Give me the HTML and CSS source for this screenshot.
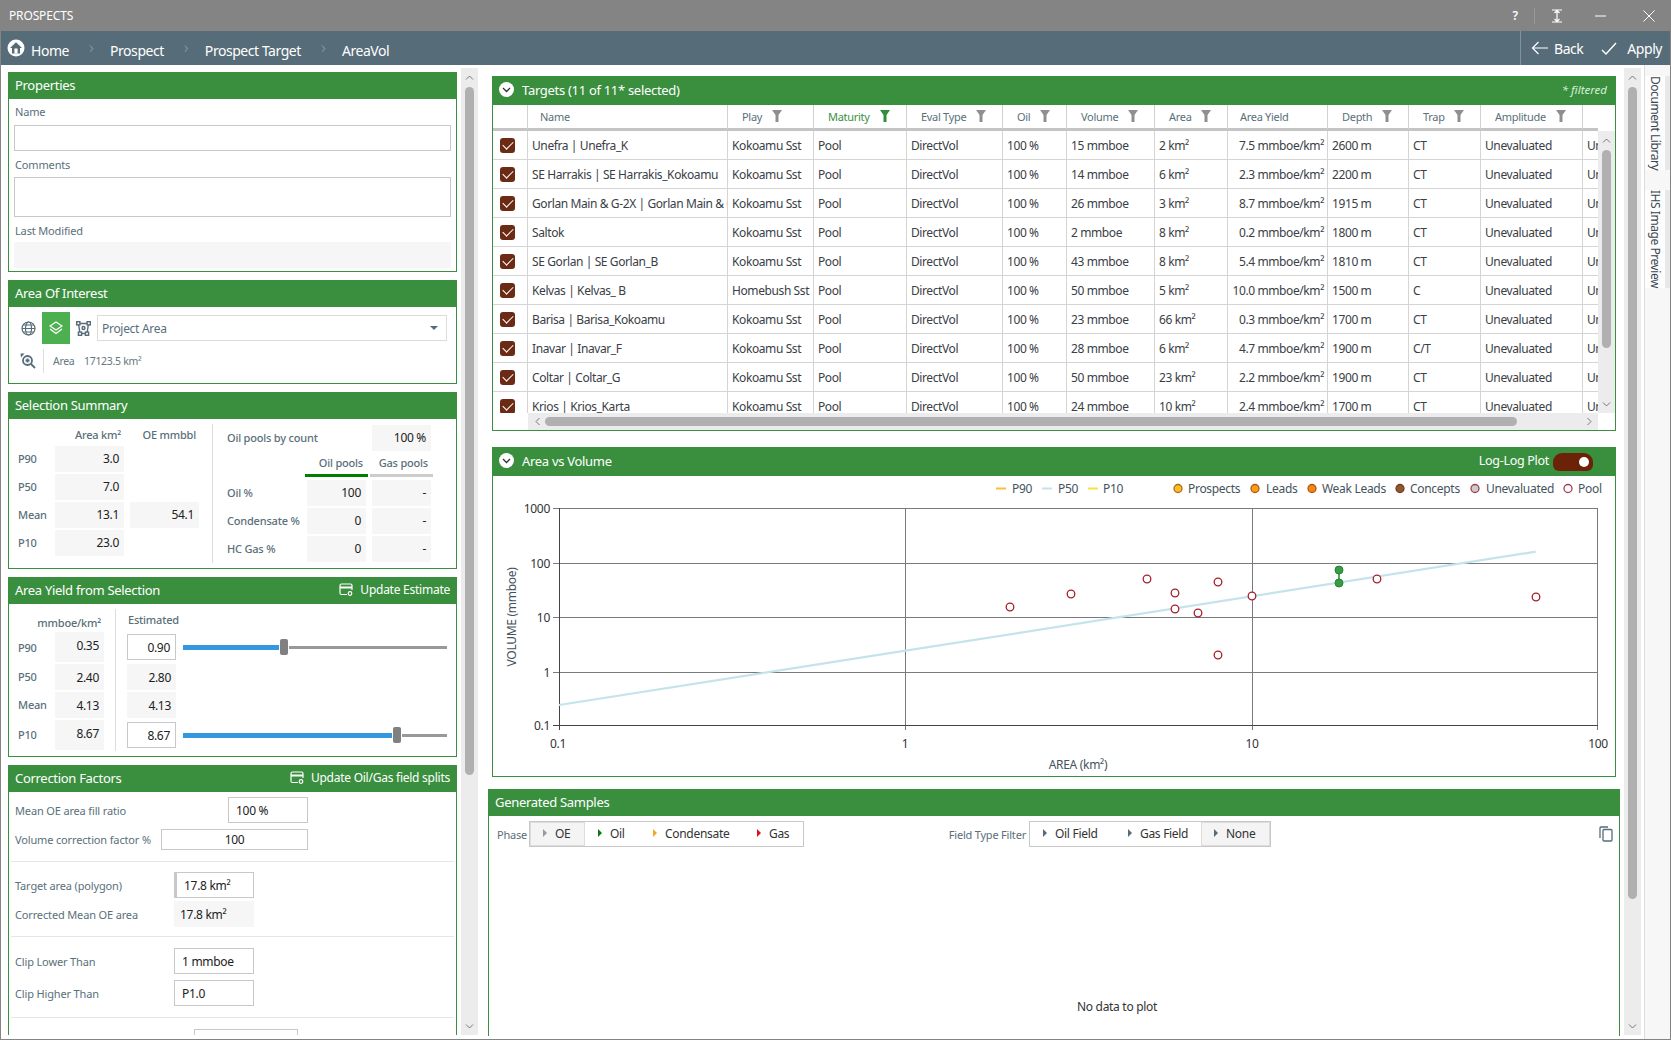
FILE: index.html
```html
<!DOCTYPE html>
<html lang="en">
<head>
<meta charset="utf-8">
<title>Prospects</title>
<link rel="stylesheet" href="styles.css">
</head>
<body>
<div class="window">
  <header class="titlebar">
    <span class="app-title">PROSPECTS</span>
    <div class="win-controls">
      <span class="help">?</span>
      <span class="win-sep"></span>
      <svg class="wi ibeam" width="12" height="14" viewBox="0 0 12 14"><path d="M1 1H11M1 13H11M6 1V13M3.5 4L6 1.5L8.5 4M3.5 10L6 12.5L8.5 10" fill="none" stroke="#fff" stroke-width="1.2"/></svg>
      <svg class="wi minim" width="11" height="2" viewBox="0 0 11 2"><path d="M0 1H11" stroke="#fff" stroke-width="1"/></svg>
      <svg class="wi closex" width="12" height="12" viewBox="0 0 12 12"><path d="M0.5 0.5L11.5 11.5M11.5 0.5L0.5 11.5" stroke="#fff" stroke-width="1"/></svg>
    </div>
  </header>
  <nav class="navbar">
    <svg class="home-ic" width="18" height="18" viewBox="0 0 18 18"><circle cx="9" cy="9" r="8.5" fill="#fff"/><path d="M9 3.2L15 9H13V14.5H5V9H3Z" fill="#566c78"/><path d="M7.4 9.5H10.6V14.5H7.4Z" fill="#fff"/></svg>
    <a class="crumb c-home">Home</a>
    <span class="crumb-sep">›</span>
    <a class="crumb">Prospect</a>
    <span class="crumb-sep">›</span>
    <a class="crumb">Prospect Target</a>
    <span class="crumb-sep">›</span>
    <a class="crumb">AreaVol</a>
    <div class="nav-actions">
      <button class="nav-btn back"><svg width="18" height="14" viewBox="0 0 18 14"><path d="M17 7H1.5M7.5 1L1.5 7L7.5 13" fill="none" stroke="#fff" stroke-width="1.2"/></svg>Back</button>
      <button class="nav-btn apply"><svg width="16" height="13" viewBox="0 0 16 13"><path d="M1 8L5 12L15 1" fill="none" stroke="#fff" stroke-width="1.4"/></svg>Apply</button>
    </div>
  </nav>

  <main class="main">
    <section class="left-pane">
      <article class="panel p-props">
        <h2 class="phead">Properties</h2>
        <div class="props-body">
          <div class="flabel lh26">Name</div>
          <div class="input h26"></div>
          <div class="flabel lc">Comments</div>
          <div class="input h40"></div>
          <div class="flabel lm">Last Modified</div>
          <div class="readonly h26"></div>
        </div>
      </article>

      <article class="panel p-aoi">
        <h2 class="phead">Area Of Interest</h2>
        <div class="aoi-row1">
          <span class="aoi-ic w28"><svg width="15" height="15" viewBox="0 0 15 15"><g fill="none" stroke="#566c78" stroke-width="1.2"><circle cx="7.5" cy="7.5" r="6.5"/><ellipse cx="7.5" cy="7.5" rx="3" ry="6.5"/><path d="M1 7.5H14M2 4H13M2 11H13"/></g></svg></span>
          <span class="aoi-ic w28 active"><svg width="14" height="14" viewBox="0 0 14 14"><g fill="none" stroke="#fff" stroke-width="1.3"><path d="M7 1L13 5L7 9L1 5Z"/><path d="M1 8L7 12.5L13 8"/></g></svg></span>
          <span class="aoi-ic w27"><svg width="15" height="15" viewBox="0 0 15 15"><g fill="none" stroke="#566c78" stroke-width="1.4"><path d="M2.5 2.5L12.5 2.5L11 12.5H4Z"/><rect x="0.7" y="0.7" width="3.2" height="3.2" fill="#fff"/><rect x="11.1" y="0.7" width="3.2" height="3.2" fill="#fff"/><rect x="2.4" y="11.1" width="3.2" height="3.2" fill="#fff"/><rect x="9.4" y="11.1" width="3.2" height="3.2" fill="#fff"/><circle cx="7.5" cy="7" r="1.5"/></g></svg></span>
          <div class="dropdown"><span>Project Area</span><span class="caret"></span></div>
        </div>
        <div class="aoi-row2">
          <span class="zoom-ic"><svg width="16" height="16" viewBox="0 0 16 16"><g fill="none" stroke="#566c78" stroke-width="1.8"><circle cx="7.5" cy="7.5" r="4.5"/><path d="M11 11L15 15M5.5 7.5H9.5M7.5 5.5V9.5"/></g><path d="M0.5 0.5H4.5L1 4.5Z" fill="#566c78"/></svg></span>
          <span class="area-k">Area</span><span class="area-v">17123.5 km²</span>
        </div>
      </article>

      <article class="panel p-sel">
        <h2 class="phead">Selection Summary</h2>
        <div class="sel-body">
          <div class="sel-left">
            <span></span><span class="colhead pr3">Area km²</span><span class="colhead oehead">OE mmbbl</span>
            <span class="rlabel">P90</span><span class="cell">3.0</span><span></span>
            <span class="rlabel">P50</span><span class="cell">7.0</span><span></span>
            <span class="rlabel">Mean</span><span class="cell">13.1</span><span class="cell oe">54.1</span>
            <span class="rlabel">P10</span><span class="cell">23.0</span><span></span>
          </div>
          <div class="vdiv"></div>
          <div class="sel-right">
            <span class="rlabel span2">Oil pools by count</span><span class="cell c-gas bottom">100 %</span>
            <span></span><span class="tab tab-oil">Oil pools</span><span class="tab tab-gas">Gas pools</span>
            <span class="rlabel">Oil %</span><span class="cell c-oil bottom">100</span><span class="cell c-gas bottom">-</span>
            <span class="rlabel">Condensate %</span><span class="cell c-oil bottom">0</span><span class="cell c-gas bottom">-</span>
            <span class="rlabel">HC Gas %</span><span class="cell c-oil bottom">0</span><span class="cell c-gas bottom">-</span>
          </div>
        </div>
      </article>

      <article class="panel p-yield">
        <h2 class="phead"><span>Area Yield from Selection</span>
          <span class="phead-act"><svg width="14" height="13" viewBox="0 0 14 13"><g fill="none" stroke="#fff" stroke-width="1.2"><path d="M8 11.5H2.5Q1 11.5 1 10V2.5Q1 1 2.5 1H11.5Q13 1 13 2.5V7"/><path d="M1 4.5H13" stroke-width="2"/><circle cx="11" cy="10.5" r="1.8"/></g></svg>Update Estimate</span></h2>
        <div class="yield-body">
          <div class="yield-left">
            <span></span><span class="colhead yhead">mmboe/km²</span>
            <span class="rlabel">P90</span><span class="cell top">0.35</span>
            <span class="rlabel">P50</span><span class="cell bottom">2.40</span>
            <span class="rlabel">Mean</span><span class="cell bottom">4.13</span>
            <span class="rlabel">P10</span><span class="cell top">8.67</span>
          </div>
          <div class="vdiv"></div>
          <div class="yield-right">
            <span class="colhead esthead">Estimated</span><span></span>
            <span class="input num bottom">0.90</span><div class="slider bottom"><i class="fill f90"></i><b class="knob"></b><i class="rest"></i></div>
            <span class="cell bottom">2.80</span><span></span>
            <span class="cell bottom">4.13</span><span></span>
            <span class="input num bottom">8.67</span><div class="slider bottom"><i class="fill f10"></i><b class="knob"></b><i class="rest"></i></div>
          </div>
        </div>
      </article>

      <article class="panel p-corr">
        <h2 class="phead"><span>Correction Factors</span>
          <span class="phead-act"><svg width="14" height="13" viewBox="0 0 14 13"><g fill="none" stroke="#fff" stroke-width="1.2"><path d="M8 11.5H2.5Q1 11.5 1 10V2.5Q1 1 2.5 1H11.5Q13 1 13 2.5V7"/><path d="M1 4.5H13" stroke-width="2"/><circle cx="11" cy="10.5" r="1.8"/></g></svg>Update Oil/Gas field splits</span></h2>
        <div class="corr-body">
          <div class="cf-row h26 mt5"><span class="cf-l l213">Mean OE area fill ratio</span><span class="input w80 txt">100 %</span></div>
          <div class="cf-row h21 mt6"><span class="cf-l l146">Volume correction factor %</span><span class="input w147 centered">100</span></div>
          <hr class="cf-hr mt11">
          <div class="cf-row h26 mt10"><span class="cf-l l159">Target area (polygon)</span><span class="input w80 txt thick">17.8 km²</span></div>
          <div class="cf-row h26 mt3"><span class="cf-l l159">Corrected Mean OE area</span><span class="readonly w80 txt2">17.8 km²</span></div>
          <hr class="cf-hr mt9">
          <div class="cf-row h26 mt11"><span class="cf-l l159">Clip Lower Than</span><span class="input w80 txt">1 mmboe</span></div>
          <div class="cf-row h26 mt6"><span class="cf-l l159">Clip Higher Than</span><span class="input w80 txt">P1.0</span></div>
          <hr class="cf-hr mt11">
          <div class="cf-row h26 mt11"><span class="cf-l l179"></span><span class="input w104"></span></div>
        </div>
      </article>
    </section>

    <div class="vs vs-left">
      <svg class="arr" width="9" height="5" viewBox="0 0 9 5"><path d="M1 4.5L4.5 1L8 4.5" fill="none" stroke="#777"/></svg>
      <span class="thumb t-left"></span>
      <svg class="arr end" width="9" height="5" viewBox="0 0 9 5"><path d="M1 .5L4.5 4L8 .5" fill="none" stroke="#777"/></svg>
    </div>

    <section class="right-pane">
      <article class="panel p-targets">
        <h2 class="phead big"><span class="ph-left"><span class="chev"><svg width="9" height="6" viewBox="0 0 9 6"><path d="M1 1L4.5 4.5L8 1" fill="none" stroke="#333" stroke-width="1.3"/></svg></span>Targets (11 of 11* selected)</span><em class="filtered">* filtered</em></h2>
        <div class="grid-row">
          <div class="grid-wrap">
            <table class="grid">
              <colgroup><col class="k0"><col class="k1"><col class="k2"><col class="k3"><col class="k4"><col class="k5"><col class="k6"><col class="k7"><col class="k8"><col class="k9"><col class="k10"><col class="k11"><col class="k12"></colgroup>
              <thead><tr>
                <th></th>
                <th class="pl12">Name</th>
                <th><div class="thi r31"><span>Play</span><svg class="flt" viewBox="0 0 10 12"><path d="M0 0H10L6.5 5V12H3.5V5Z"/></svg></div></th>
                <th class="on"><div class="thi"><span>Maturity</span><svg class="flt" viewBox="0 0 10 12"><path d="M0 0H10L6.5 5V12H3.5V5Z"/></svg></div></th>
                <th><div class="thi"><span>Eval Type</span><svg class="flt" viewBox="0 0 10 12"><path d="M0 0H10L6.5 5V12H3.5V5Z"/></svg></div></th>
                <th><div class="thi"><span>Oil</span><svg class="flt" viewBox="0 0 10 12"><path d="M0 0H10L6.5 5V12H3.5V5Z"/></svg></div></th>
                <th><div class="thi"><span>Volume</span><svg class="flt" viewBox="0 0 10 12"><path d="M0 0H10L6.5 5V12H3.5V5Z"/></svg></div></th>
                <th><div class="thi"><span>Area</span><svg class="flt" viewBox="0 0 10 12"><path d="M0 0H10L6.5 5V12H3.5V5Z"/></svg></div></th>
                <th class="pl12">Area Yield</th>
                <th><div class="thi"><span>Depth</span><svg class="flt" viewBox="0 0 10 12"><path d="M0 0H10L6.5 5V12H3.5V5Z"/></svg></div></th>
                <th><div class="thi"><span>Trap</span><svg class="flt" viewBox="0 0 10 12"><path d="M0 0H10L6.5 5V12H3.5V5Z"/></svg></div></th>
                <th><div class="thi"><span>Amplitude</span><svg class="flt" viewBox="0 0 10 12"><path d="M0 0H10L6.5 5V12H3.5V5Z"/></svg></div></th>
                <th></th>
              </tr></thead>
              <tbody>
                <tr><td class="ck"><span class="cb"></span></td><td>Unefra | Unefra_K</td><td>Kokoamu Sst</td><td>Pool</td><td>DirectVol</td><td>100 %</td><td>15 mmboe</td><td>2 km²</td><td class="ra">7.5 mmboe/km²</td><td>2600 m</td><td>CT</td><td>Unevaluated</td><td>Unevaluated</td></tr>
                <tr><td class="ck"><span class="cb"></span></td><td>SE Harrakis | SE Harrakis_Kokoamu</td><td>Kokoamu Sst</td><td>Pool</td><td>DirectVol</td><td>100 %</td><td>14 mmboe</td><td>6 km²</td><td class="ra">2.3 mmboe/km²</td><td>2200 m</td><td>CT</td><td>Unevaluated</td><td>Unevaluated</td></tr>
                <tr><td class="ck"><span class="cb"></span></td><td>Gorlan Main &amp; G-2X | Gorlan Main &amp; G-2X</td><td>Kokoamu Sst</td><td>Pool</td><td>DirectVol</td><td>100 %</td><td>26 mmboe</td><td>3 km²</td><td class="ra">8.7 mmboe/km²</td><td>1915 m</td><td>CT</td><td>Unevaluated</td><td>Unevaluated</td></tr>
                <tr><td class="ck"><span class="cb"></span></td><td>Saltok</td><td>Kokoamu Sst</td><td>Pool</td><td>DirectVol</td><td>100 %</td><td>2 mmboe</td><td>8 km²</td><td class="ra">0.2 mmboe/km²</td><td>1800 m</td><td>CT</td><td>Unevaluated</td><td>Unevaluated</td></tr>
                <tr><td class="ck"><span class="cb"></span></td><td>SE Gorlan | SE Gorlan_B</td><td>Kokoamu Sst</td><td>Pool</td><td>DirectVol</td><td>100 %</td><td>43 mmboe</td><td>8 km²</td><td class="ra">5.4 mmboe/km²</td><td>1810 m</td><td>CT</td><td>Unevaluated</td><td>Unevaluated</td></tr>
                <tr><td class="ck"><span class="cb"></span></td><td>Kelvas | Kelvas_ B</td><td>Homebush Sst</td><td>Pool</td><td>DirectVol</td><td>100 %</td><td>50 mmboe</td><td>5 km²</td><td class="ra">10.0 mmboe/km²</td><td>1500 m</td><td>C</td><td>Unevaluated</td><td>Unevaluated</td></tr>
                <tr><td class="ck"><span class="cb"></span></td><td>Barisa | Barisa_Kokoamu</td><td>Kokoamu Sst</td><td>Pool</td><td>DirectVol</td><td>100 %</td><td>23 mmboe</td><td>66 km²</td><td class="ra">0.3 mmboe/km²</td><td>1700 m</td><td>CT</td><td>Unevaluated</td><td>Unevaluated</td></tr>
                <tr><td class="ck"><span class="cb"></span></td><td>Inavar | Inavar_F</td><td>Kokoamu Sst</td><td>Pool</td><td>DirectVol</td><td>100 %</td><td>28 mmboe</td><td>6 km²</td><td class="ra">4.7 mmboe/km²</td><td>1900 m</td><td>C/T</td><td>Unevaluated</td><td>Unevaluated</td></tr>
                <tr><td class="ck"><span class="cb"></span></td><td>Coltar | Coltar_G</td><td>Kokoamu Sst</td><td>Pool</td><td>DirectVol</td><td>100 %</td><td>50 mmboe</td><td>23 km²</td><td class="ra">2.2 mmboe/km²</td><td>1900 m</td><td>CT</td><td>Unevaluated</td><td>Unevaluated</td></tr>
                <tr><td class="ck"><span class="cb"></span></td><td>Krios | Krios_Karta</td><td>Kokoamu Sst</td><td>Pool</td><td>DirectVol</td><td>100 %</td><td>24 mmboe</td><td>10 km²</td><td class="ra">2.4 mmboe/km²</td><td>1700 m</td><td>CT</td><td>Unevaluated</td><td>Unevaluated</td></tr>
              </tbody>
            </table>
          </div>
          <div class="vs vs-table">
            <svg class="arr" width="9" height="5" viewBox="0 0 9 5"><path d="M1 4.5L4.5 1L8 4.5" fill="none" stroke="#777"/></svg>
            <span class="thumb t-table"></span>
            <svg class="arr end" width="9" height="5" viewBox="0 0 9 5"><path d="M1 .5L4.5 4L8 .5" fill="none" stroke="#777"/></svg>
          </div>
        </div>
        <div class="hs-row">
          <div class="hs">
            <svg width="5" height="9" viewBox="0 0 5 9"><path d="M4.5 1L1 4.5L4.5 8" fill="none" stroke="#777"/></svg>
            <span class="hthumb"></span>
            <svg class="hs-end" width="5" height="9" viewBox="0 0 5 9"><path d="M.5 1L4 4.5L.5 8" fill="none" stroke="#777"/></svg>
          </div>
        </div>
      </article>

      <article class="panel p-chart">
        <h2 class="phead big"><span class="ph-left"><span class="chev"><svg width="9" height="6" viewBox="0 0 9 6"><path d="M1 1L4.5 4.5L8 1" fill="none" stroke="#333" stroke-width="1.3"/></svg></span>Area vs Volume</span>
          <span class="loglog">Log-Log Plot<span class="toggle"><span class="knob-w"></span></span></span></h2>
        <svg class="chart" width="1122" height="300" viewBox="493 476 1122 300">
          <g class="lg">
            <path d="M996 488.5H1006" stroke="#fdbb42" stroke-width="2"/><text x="1012" y="493">P90</text>
            <path d="M1042 488.5H1052" stroke="#c5e3ec" stroke-width="2"/><text x="1058" y="493">P50</text>
            <path d="M1088 488.5H1098" stroke="#fde047" stroke-width="2"/><text x="1103" y="493">P10</text>
            <circle cx="1178" cy="488.5" r="4" fill="#ffc21a" stroke="#b0652a" stroke-width="1.3"/><text x="1188" y="493">Prospects</text>
            <circle cx="1255" cy="488.5" r="4" fill="#ff9f0a" stroke="#b0552a" stroke-width="1.3"/><text x="1266" y="493">Leads</text>
            <circle cx="1312" cy="488.5" r="4" fill="#f58a07" stroke="#b0552a" stroke-width="1.3"/><text x="1322" y="493">Weak Leads</text>
            <circle cx="1400" cy="488.5" r="4" fill="#8b5a2b" stroke="#7a3a2a" stroke-width="1.3"/><text x="1410" y="493">Concepts</text>
            <circle cx="1475" cy="488.5" r="4" fill="#ccc" stroke="#a04050" stroke-width="1.3"/><text x="1486" y="493">Unevaluated</text>
            <circle cx="1568" cy="488.5" r="4" fill="#fff" stroke="#a04050" stroke-width="1.3"/><text x="1578" y="493">Pool</text>
          </g>
          <g class="gridl">
            <path d="M553 508.5H1598M553 563.5H1598M553 617.5H1598M553 672.5H1598"/>
            <path d="M905.5 508V730M1252.5 508V730M1597.5 508V730"/>
          </g>
          <path d="M559.5 508V730M553 725.5H1598" fill="none" stroke="#444" stroke-width="1"/>
          <g class="ticks">
            <text x="550" y="513" text-anchor="end">1000</text>
            <text x="550" y="568" text-anchor="end">100</text>
            <text x="550" y="622" text-anchor="end">10</text>
            <text x="550" y="677" text-anchor="end">1</text>
            <text x="550" y="730" text-anchor="end">0.1</text>
            <text x="558" y="748" text-anchor="middle">0.1</text>
            <text x="905" y="748" text-anchor="middle">1</text>
            <text x="1252" y="748" text-anchor="middle">10</text>
            <text x="1598" y="748" text-anchor="middle">100</text>
          </g>
          <text class="axt" x="1078" y="769" text-anchor="middle">AREA (km²)</text>
          <text class="axt" transform="translate(516 617) rotate(-90)" text-anchor="middle">VOLUME (mmboe)</text>
          <path d="M559 705L905.6 650.7L1535.6 551.7" fill="none" stroke="#c5e3ec" stroke-width="2.2"/>
          <g fill="#fff" stroke="#a3202c" stroke-width="1.3">
            <circle cx="1010" cy="607" r="3.8"/><circle cx="1071" cy="594" r="3.8"/><circle cx="1147" cy="579" r="3.8"/>
            <circle cx="1175" cy="593" r="3.8"/><circle cx="1175" cy="609" r="3.8"/><circle cx="1198" cy="613" r="3.8"/>
            <circle cx="1218" cy="582" r="3.8"/><circle cx="1218" cy="655" r="3.8"/><circle cx="1252" cy="596" r="3.8"/>
            <circle cx="1377" cy="579" r="3.8"/><circle cx="1536" cy="597" r="3.8"/>
          </g>
          <path d="M1339 570V583" stroke="#1e8a2a" stroke-width="1.5"/>
          <circle cx="1339" cy="570" r="4" fill="#3a9a48" stroke="#1e8a2a"/>
          <circle cx="1339" cy="583" r="4" fill="#3a9a48" stroke="#1e8a2a"/>
        </svg>
      </article>

      <article class="panel p-gen">
        <h2 class="phead">Generated Samples</h2>
        <div class="gen-bar">
          <div class="seg-group g1">
            <span class="seg-l l32">Phase</span>
            <div class="seg">
              <span class="sb w55 sel"><i class="tri t-gray"></i>OE</span>
              <span class="sb w55"><i class="tri t-green"></i>Oil</span>
              <span class="sb w104"><i class="tri t-orange"></i>Condensate</span>
              <span class="sb w59"><i class="tri t-red"></i>Gas</span>
            </div>
          </div>
          <div class="seg-group">
            <span class="seg-l l120">Field Type Filter</span>
            <div class="seg">
              <span class="sb w85"><i class="tri t-slate"></i>Oil Field</span>
              <span class="sb w86"><i class="tri t-slate"></i>Gas Field</span>
              <span class="sb w69 sel"><i class="tri t-slate"></i>None</span>
            </div>
          </div>
          <svg class="copy" width="14" height="16" viewBox="0 0 14 16"><g fill="none" stroke="#566c78" stroke-width="1.3"><rect x="4" y="3.5" width="9" height="11.5" rx="1"/><path d="M1 12V2Q1 1 2 1H9"/></g></svg>
        </div>
        <p class="nodata">No data to plot</p>
      </article>
    </section>

    <div class="vs vs-right">
      <svg class="arr" width="9" height="5" viewBox="0 0 9 5"><path d="M1 4.5L4.5 1L8 4.5" fill="none" stroke="#777"/></svg>
      <span class="thumb t-right"></span>
      <svg class="arr end" width="9" height="5" viewBox="0 0 9 5"><path d="M1 .5L4.5 4L8 .5" fill="none" stroke="#777"/></svg>
    </div>

    <aside class="side">
      <span class="side-tab st1">Document Library</span>
      <span class="side-tab st2">IHS Image Preview</span>
    </aside>
  </main>
</div>
</body>
</html>
```

FILE: styles.css
```css
* { box-sizing: border-box; }
html, body { margin: 0; padding: 0; height: 100%; background: #fff; overflow: hidden; }
body { font-family: "Noto Sans", "Open Sans", sans-serif; font-size: 12px; color: #333; letter-spacing: -0.3px; }
h2, p { margin: 0; font-weight: 400; }
hr { border: 0; margin: 0; }
.window { width: 1671px; height: 1040px; border: 1px solid #848484; border-top: 0; display: flex; flex-direction: column; overflow: hidden; }

.titlebar { height: 31px; margin: 0 -1px; background: #848484; color: #fff; display: flex; align-items: center; padding-left: 9px; flex: none; }
.app-title { font-size: 12px; letter-spacing: -0.15px; }
.win-controls { margin-left: auto; display: flex; align-items: center; height: 100%; }
.help { font-size: 12px; font-weight: 600; width: 12px; margin-right: 13px; text-align: center; }
.win-sep { width: 1px; height: 16px; background: #9a9a9a; }
.wi { flex: none; }
.ibeam { margin-left: 16px; }
.minim { margin-left: 32px; }
.closex { margin-left: 37px; margin-right: 16px; }

.navbar { height: 34px; background: #566c78; color: #fff; display: flex; align-items: center; flex: none; padding-left: 6px; font-size: 14px; letter-spacing: -0.45px; }
.home-ic { flex: none; }
.crumb { margin-top: 5px; white-space: nowrap; }
.c-home { margin-left: 6px; }
.crumb-sep { color: #7f929d; font-size: 16px; width: 8px; margin: -3px 13px 0 20px; }
.nav-actions { margin-left: auto; align-self: stretch; display: flex; align-items: center; border-left: 1px solid #7f929d; width: 150px; padding-left: 10px; }
.nav-btn { border: 0; background: none; color: #fff; font: inherit; letter-spacing: inherit; display: flex; align-items: center; padding: 0; }
.back svg { margin-right: 5px; }
.apply { margin-left: 18px; }
.apply svg { margin-right: 10px; }

.main { flex: 1; display: flex; min-height: 0; }
.left-pane { width: 460px; flex: none; height: 970px; overflow: hidden; padding: 7px 4px 0 7px; display: flex; flex-direction: column; gap: 8px; }
.right-pane { width: 1146px; flex: none; height: 971px; overflow: hidden; padding-top: 11px; }

.vs { width: 17px; background: #ececec; display: flex; flex-direction: column; align-items: center; flex: none; padding-top: 7px; }
.vs-left, .vs-right { margin-top: 3px; height: 967px; }
.thumb { width: 9px; background: #b0b0b0; border-radius: 5px; margin-top: 7px; flex: none; }
.t-left { height: 688px; }
.t-right { height: 812px; }
.t-table { height: 198px; }
.arr { flex: none; }
.arr.end { margin-top: auto; margin-bottom: 6px; }
.vs-table { margin-top: 26px; height: 282px; }
.side { width: 26px; flex: none; margin-left: 3px; border-left: 1px solid #ddd; background: #f7f7f7; padding-top: 11px; display: flex; flex-direction: column; }
.side-tab { writing-mode: vertical-rl; font-size: 12px; color: #3a4650; background: #fdfdfd; border-right: 5px solid #e8e8e8; display: block; text-align: left; width: 25px; line-height: 20px; letter-spacing: -0.45px; white-space: nowrap; }
.st1 { height: 94px; }
.st2 { height: 98px; margin-top: 20px; }

.panel { border: 1px solid #3a8f3f; border-top: 0; background: #fff; flex: none; }
.phead { height: 27px; margin: 0 -1px; background: #3a8f3f; color: #fff; font-size: 13px; padding: 0 7px 2px; display: flex; align-items: center; justify-content: space-between; letter-spacing: -0.3px; }
.phead.big { height: 29px; }
.ph-left { display: flex; align-items: center; }
.chev { width: 15px; height: 15px; border-radius: 50%; background: #fff; display: flex; align-items: center; justify-content: center; margin-right: 8px; }
.phead-act { display: flex; align-items: center; font-size: 12px; gap: 7px; letter-spacing: -0.25px; }
.filtered { font-size: 11.5px; color: #d7f0d7; margin-right: 2px; letter-spacing: 0; }

.p-props { height: 200px; }
.p-aoi { height: 104px; }
.p-sel { height: 177px; }
.p-yield { height: 180px; }
.p-corr { height: 400px; }

.props-body { padding: 0 5px; }
.flabel { font-size: 11px; color: #5a6f7a; padding-left: 1px; letter-spacing: -0.15px; }
.lh26 { line-height: 26px; }
.lc { height: 26px; line-height: 28px; }
.lm { height: 25px; line-height: 28px; }
.input { display: block; border: 1px solid #c8c8c8; background: #fff; color: #222; }
.h26 { height: 26px; }
.h40 { height: 40px; }
.h21 { height: 21px; }
.readonly { display: block; background: #f6f6f6; color: #222; }

.aoi-row1 { display: flex; align-items: center; height: 32px; margin-top: 5px; padding-left: 5px; }
.aoi-ic { height: 32px; display: flex; align-items: center; justify-content: center; flex: none; }
.w28 { width: 28px; }
.w27 { width: 27px; }
.active { background: #4caf50; }
.dropdown { width: 350px; height: 26px; border: 1px solid #dcdcdc; display: flex; align-items: center; justify-content: space-between; padding: 0 8px 0 4px; color: #5a6f7a; }
.caret { width: 0; height: 0; border: 4px solid transparent; border-top: 4px solid #566c78; border-bottom: 0; }
.aoi-row2 { display: flex; align-items: center; height: 24px; margin-top: 5px; font-size: 10.5px; color: #66777f; }
.zoom-ic { margin-left: 11px; width: 24px; height: 24px; border-right: 1px solid #ddd; display: flex; align-items: center; flex: none; }
.area-k { margin-left: 9px; width: 31px; }

.sel-body, .yield-body { display: flex; }
.sel-left { width: 203px; padding-left: 9px; display: grid; grid-template-columns: 37px 69px 75px; grid-template-rows: 25px repeat(4, 26px); row-gap: 2px; align-content: start; }
.colhead { font-size: 11px; color: #5a6f7a; text-align: right; align-self: end; white-space: nowrap; font-weight: 500; line-height: 18px; letter-spacing: -0.2px; }
.pr3 { padding-right: 3px; }
.oehead { padding-right: 3px; }
.rlabel { font-size: 11px; color: #5a6f7a; display: flex; align-items: center; font-weight: 500; white-space: nowrap; letter-spacing: -0.2px; }
.cell { background: #f6f6f6; display: flex; align-items: center; justify-content: flex-end; padding-right: 5px; color: #222; height: 26px; }
.sel-body .cell, .sel-body .rlabel { padding-bottom: 2px; }
.oe { margin-left: 6px; }
.vdiv { width: 1px; background: #dcdcdc; margin: 5px 0; flex: none; height: 139px; }
.p-yield .vdiv { height: 142px; }
.sel-right { padding: 6px 0 0 14px; display: grid; grid-template-columns: 80px 65px 59px; grid-template-rows: 26px 26px 29px 28px 28px; }
.sel-right .rlabel { align-self: end; height: 26px; }
.span2 { grid-column: 1 / 3; }
.bottom { align-self: end; }
.c-oil { width: 59px; }
.c-gas { width: 59px; }
.tab { font-size: 11px; color: #5a6f7a; font-weight: 500; text-align: right; height: 26px; line-height: 23px; white-space: nowrap; padding-right: 5px; letter-spacing: -0.2px; }
.tab-oil { margin: 0 -3px 0 -2px; width: 63px; border-bottom: 3px solid #008000; }
.tab-gas { margin-left: -2px; width: 63px; border-bottom: 3px solid #ccc; }

.yield-left { width: 106px; padding-left: 9px; display: grid; grid-template-columns: 37px 49px; grid-template-rows: 28px 30px 28px 28px 32px; align-content: start; }
.yhead { padding-right: 3px; margin-left: -20px; }
.yield-left .top { height: 30px; align-self: end; align-items: flex-start; padding-top: 5px; }
.yield-right { padding-left: 11px; display: grid; grid-template-columns: 49px 271px; grid-template-rows: 30px 26px 30px 28px 30px; }
.esthead { text-align: left; padding-left: 1px; margin-bottom: 5px; }
.num { height: 26px; display: flex; align-items: center; justify-content: flex-end; padding-right: 5px; }
.slider { margin-left: 7px; width: 264px; height: 26px; display: flex; align-items: center; gap: 1px; }
.fill { height: 5px; background: #3498e0; display: block; flex: none; }
.f90 { width: 96px; }
.f10 { width: 209px; }
.knob { width: 8px; height: 16px; border-radius: 2px; background: #808080; flex: none; display: block; }
.rest { height: 3px; background: #999; flex: 1; display: block; }

.corr-body { padding: 0; }
.cf-row { display: flex; align-items: center; padding-left: 6px; }
.cf-l { font-size: 11px; color: #5a6f7a; flex: none; white-space: nowrap; letter-spacing: -0.15px; }
.l213 { width: 213px; }
.l146 { width: 146px; }
.l159 { width: 159px; }
.l179 { width: 179px; }
.w80 { width: 80px; height: 100%; }
.w147 { width: 147px; height: 100%; }
.w104 { width: 104px; height: 100%; }
.txt { display: flex; align-items: center; padding-left: 7px; }
.txt2 { display: flex; align-items: center; padding-left: 6px; }
.thick { border-left: 3px solid #c8c8c8; padding-left: 7px; }
.centered { display: flex; align-items: center; justify-content: center; line-height: 21px; }
.cf-hr { height: 1px; background: #e6e6e6; margin-left: 2px; margin-right: 2px; }
.mt3 { margin-top: 3px; }
.mt5 { margin-top: 5px; }
.mt6 { margin-top: 6px; }
.mt9 { margin-top: 9px; }
.mt10 { margin-top: 10px; }
.mt11 { margin-top: 11px; }

.p-targets { margin-left: 14px; width: 1124px; height: 355px; }
.grid-row { display: flex; height: 308px; }
.grid-wrap { width: 1105px; height: 308px; overflow: hidden; flex: none; }
.grid { width: 1190px; table-layout: fixed; border-collapse: separate; border-spacing: 0; }
.k0 { width: 35px; } .k1 { width: 200px; } .k2 { width: 86px; } .k3 { width: 93px; } .k4 { width: 96px; }
.k5 { width: 64px; } .k6 { width: 88px; } .k7 { width: 73px; } .k8 { width: 100px; } .k9 { width: 81px; }
.k10 { width: 72px; } .k11 { width: 102px; } .k12 { width: 100px; }
.grid th { height: 26px; padding: 0 0 0 14px; font-size: 11px; font-weight: 400; color: #5a6f7a; text-align: left; border-right: 1px solid #d0d0d0; border-bottom: 3px solid #c4c4c4; }
.grid th.pl12 { padding-left: 12px; }
.grid th.on { color: #3a8f3f; }
.thi { display: flex; justify-content: space-between; align-items: center; padding-right: 16px; }
.thi.r31 { padding-right: 31px; }
.flt { width: 10px; height: 12px; fill: #8f8f8f; flex: none; margin-top: -2px; }
.on .flt { fill: #2f8f38; }
.grid td { height: 29px; padding: 0 0 0 4px; border-right: 1px solid #d5d5d5; border-bottom: 1px solid #d5d5d5; white-space: nowrap; overflow: hidden; color: #3a4046; letter-spacing: -0.4px; }
.grid td.ra { text-align: right; padding: 0 3px 0 0; }
.grid td.ck { padding: 0 0 0 7px; }
.cb { display: block; width: 15px; height: 15px; border-radius: 3px; background: #6b2a14; position: relative; }
.cb::after { content: ""; position: absolute; left: 3px; top: 3px; width: 9px; height: 5px; border-left: 1px solid #fff; border-bottom: 1px solid #fff; transform: rotate(-45deg); }
.hs-row { height: 17px; padding-left: 35px; }
.hs { width: 1070px; height: 17px; background: #ececec; display: flex; align-items: center; padding-left: 7px; }
.hthumb { margin-left: 5px; width: 972px; height: 9px; background: #b0b0b0; border-radius: 5px; flex: none; }
.hs-end { margin-left: auto; margin-right: 6px; }

.p-chart { margin: 16px 0 0 14px; width: 1124px; height: 330px; }
.chart { display: block; }
.chart text { font-family: "Noto Sans", "Open Sans", sans-serif; font-size: 12px; letter-spacing: -0.3px; }
.lg text { fill: #46535c; }
.ticks text { fill: #333; }
.axt { fill: #46535c; }
.gridl path { stroke: #7a7a7a; stroke-width: 1; fill: none; }
.loglog { display: flex; align-items: center; font-size: 12.5px; margin-right: 16px; }
.toggle { margin-left: 4px; width: 40px; height: 18px; margin-top: 2px; border-radius: 9px 9px 6px 6px; background: #6b2208; display: flex; align-items: center; justify-content: flex-end; padding-right: 4px; }
.knob-w { width: 10px; height: 10px; border-radius: 50%; background: #fff; }

.p-gen { margin: 12px 0 0 10px; width: 1132px; height: 260px; }
.gen-bar { display: flex; align-items: flex-start; padding: 5px 6px 0 8px; }
.seg-group { display: flex; align-items: center; flex: none; }
.g1 { width: 409px; }
.seg-l { font-size: 11px; color: #5a6f7a; flex: none; padding-top: 1px; white-space: nowrap; letter-spacing: -0.2px; }
.l32 { width: 32px; }
.l120 { width: 123px; text-align: right; padding-right: 3px; }
.seg { display: flex; height: 26px; border: 1px solid #c8c8c8; flex: none; }
.sb { display: flex; align-items: center; padding: 0 0 2px 13px; flex: none; color: #333; white-space: nowrap; }
.sb.sel { background: #f4f4f4; box-shadow: inset 0 0 0 1px #ddd; }
.w55 { width: 55px; } .w59 { width: 59px; } .w104 { width: 104px; }
.w85 { width: 85px; } .w86 { width: 86px; } .w69 { width: 69px; }
.tri { width: 0; height: 0; border-left: 4px solid #888; border-top: 4px solid transparent; border-bottom: 4px solid transparent; margin-right: 8px; flex: none; }
.t-gray { border-left-color: #999; }
.t-green { border-left-color: #0a7a0a; }
.t-orange { border-left-color: #f5a623; }
.t-red { border-left-color: #e0101a; }
.t-slate { border-left-color: #566c78; }
.copy { margin: 5px 0 0 auto; flex: none; }
.nodata { text-align: center; padding-left: 126px; margin-top: 151px; color: #333; }
```
